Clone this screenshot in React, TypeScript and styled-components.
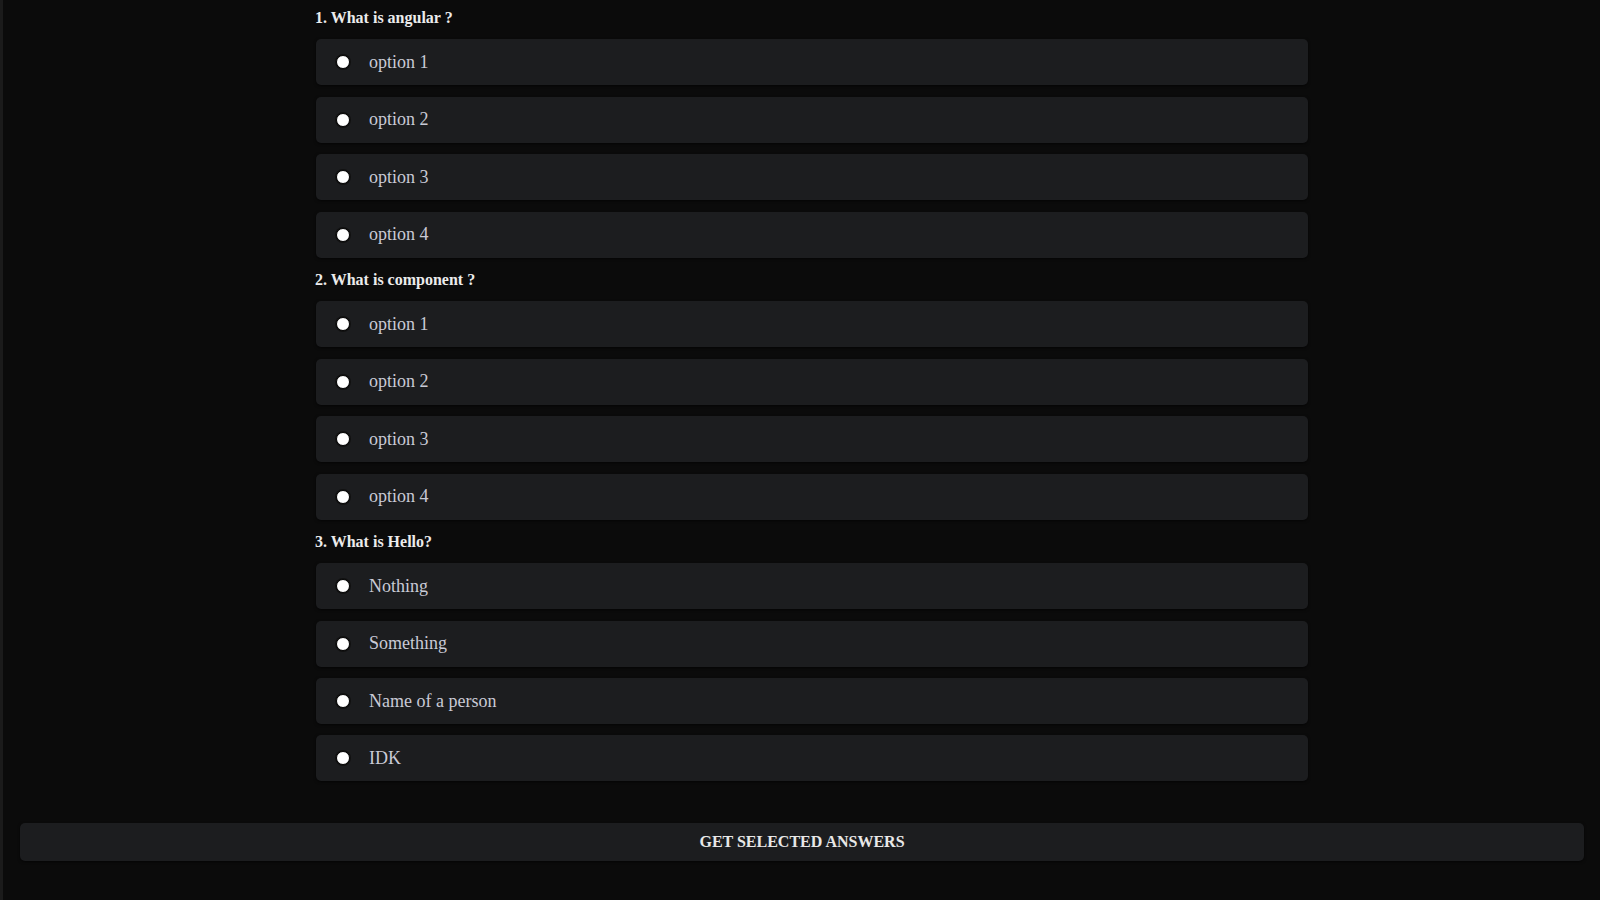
import React, { useState } from "react";
import styled, { createGlobalStyle } from "styled-components";

const GlobalStyle = createGlobalStyle`
  html, body {
    margin: 0;
    padding: 0;
    background: #0b0b0b;
  }
  * {
    box-sizing: border-box;
  }
`;

const Page = styled.div`
  min-height: 100vh;
  background: #0b0b0b;
  border-left: 3px solid #1b1b1b;
  padding: 7px 16px 40px 17px;
  font-family: "Liberation Serif", "Times New Roman", serif;
`;

const Quiz = styled.div`
  width: 992px;
  margin-left: 296px;
  display: flex;
  flex-direction: column;
  gap: 11.4px;
`;

const QuestionTitle = styled.div`
  font-size: 16px;
  font-weight: 700;
  line-height: 21px;
  color: #ececec;
  margin-left: -1px;
`;

const OptionRow = styled.label<{ $selected: boolean }>`
  height: 46px;
  display: flex;
  align-items: center;
  gap: 19px;
  padding-left: 20px;
  border-radius: 5px;
  background: ${(p) => (p.$selected ? "#26272a" : "#1c1d1f")};
  box-shadow: 0 1px 3px rgba(0, 0, 0, 0.6);
  cursor: pointer;
  font-size: 18px;
  color: #c9cad6;
`;

const Radio = styled.input`
  appearance: none;
  margin: 0;
  width: 14px;
  height: 14px;
  border-radius: 50%;
  background: #ffffff;
  border: 1px solid #000;
  box-shadow: 0 0 0 1px #111;
  cursor: pointer;

  &:checked {
    background: radial-gradient(circle, #1c1d1f 0 3px, #ffffff 3.5px);
  }
`;

const SubmitButton = styled.button`
  display: block;
  width: 100%;
  height: 38px;
  margin-top: 42px;
  border: none;
  border-radius: 5px;
  background: #1c1d1f;
  box-shadow: 0 1px 3px rgba(0, 0, 0, 0.6);
  color: #e8e8e8;
  font-family: "Liberation Serif", "Times New Roman", serif;
  font-size: 16px;
  font-weight: 700;
  text-transform: uppercase;
  cursor: pointer;
`;

const questions = [
  {
    title: "1. What is angular ?",
    options: ["option 1", "option 2", "option 3", "option 4"],
  },
  {
    title: "2. What is component ?",
    options: ["option 1", "option 2", "option 3", "option 4"],
  },
  {
    title: "3. What is Hello?",
    options: ["Nothing", "Something", "Name of a person", "IDK"],
  },
];

export default function App() {
  const [answers, setAnswers] = useState<Record<number, number>>({});

  return (
    <>
      <GlobalStyle />
      <Page>
        <Quiz>
          {questions.map((q, qi) => (
            <React.Fragment key={qi}>
              <QuestionTitle>{q.title}</QuestionTitle>
              {q.options.map((opt, oi) => (
                <OptionRow key={oi} $selected={answers[qi] === oi}>
                  <Radio
                    type="radio"
                    name={`q${qi}`}
                    checked={answers[qi] === oi}
                    onChange={() => setAnswers((a) => ({ ...a, [qi]: oi }))}
                  />
                  {opt}
                </OptionRow>
              ))}
            </React.Fragment>
          ))}
        </Quiz>
        <SubmitButton onClick={() => console.log(answers)}>
          Get selected answers
        </SubmitButton>
      </Page>
    </>
  );
}
